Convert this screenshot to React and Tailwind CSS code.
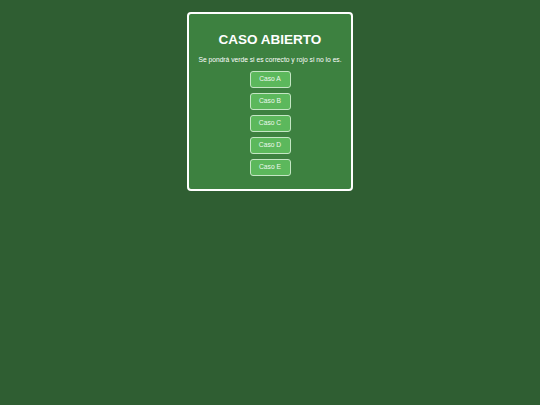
export default function App() {
  const cases = ["Caso A", "Caso B", "Caso C", "Caso D", "Caso E"];
  return (
    <div className="min-h-screen w-full bg-[#2f5e32] pt-[12px] font-['Liberation_Sans',Arial,sans-serif]">
      <div className="mx-auto w-[166px] rounded-[4px] border-2 border-white bg-[#3d8140] px-2 pt-[17px] pb-[13px] text-center text-white">
        <h1 className="text-[13.5px] font-bold leading-[18px]">CASO ABIERTO</h1>
        <p className="mt-[6px] text-[6.7px] leading-[9px]">
          Se pondrá verde si es correcto y rojo si no lo es.
        </p>
        <div className="mt-[7px] flex flex-col items-center gap-[5px]">
          {cases.map((c) => (
            <button
              key={c}
              className="h-[17px] w-[41px] rounded-[3px] border border-[#c4e6c4] bg-[#5cb85c] text-[6.7px] leading-none text-[#eef8ee]"
            >
              {c}
            </button>
          ))}
        </div>
      </div>
    </div>
  );
}
